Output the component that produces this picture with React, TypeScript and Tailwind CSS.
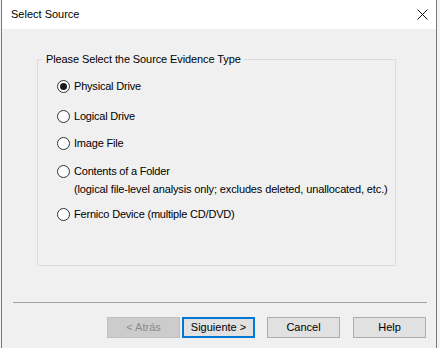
import React, { useState } from "react";

const options = [
  { id: "physical", label: "Physical Drive" },
  { id: "logical", label: "Logical Drive" },
  { id: "image", label: "Image File" },
  { id: "folder", label: "Contents of a Folder", note: "(logical file-level analysis only; excludes deleted, unallocated, etc.)" },
  { id: "fernico", label: "Fernico Device (multiple CD/DVD)" },
];

// vertical gap above each row, taken from the screenshot
const rowGaps = ["mt-[13px]", "mt-[16px]", "mt-[13px]", "mt-[14px]", "mt-[11px]"];

const Radio = ({ checked }: { checked: boolean }) => (
  <span className="flex items-center justify-center w-[13px] h-[13px] rounded-full border border-[#333333] bg-white shrink-0">
    {checked && <span className="w-[7px] h-[7px] rounded-full bg-[#1a1a1a]" />}
  </span>
);

const DialogButton = ({ children, primary, disabled }: { children: React.ReactNode; primary?: boolean; disabled?: boolean }) => {
  let cls = "w-[73px] h-[21px] flex items-center justify-center text-[11px] leading-none ";
  if (disabled) cls += "bg-[#cccccc] border border-[#bfbfbf] text-[#8a8a8a]";
  else if (primary) cls += "bg-[#e1e1e1] border-2 border-[#0078d7] text-black";
  else cls += "bg-[#e1e1e1] border border-[#adadad] text-black";
  return <button className={cls}>{children}</button>;
};

export default function App() {
  const [selected, setSelected] = useState("physical");

  return (
    <div className="w-[440px] h-[348px] bg-[#f3f3f3] overflow-hidden" style={{ fontFamily: '"Liberation Sans", Arial, sans-serif' }}>
      <div className="ml-px w-[436px] h-[348px] border-x border-[#7a7a7a] bg-[#f0f0f0] flex flex-col">
        {/* title bar */}
        <div className="h-[29px] bg-white flex items-center justify-between pl-[9px] pr-[8px] shrink-0">
          <span className="text-[11px] text-black">Select Source</span>
          <svg width="11" height="11" viewBox="0 0 11 11" className="mt-[-1px]">
            <path d="M0.5 0.5L10.5 10.5M10.5 0.5L0.5 10.5" stroke="#111" strokeWidth="1" />
          </svg>
        </div>

        {/* evidence type group */}
        <fieldset className="ml-[35px] mt-[23px] w-[359px] border border-[#dcdcdc] pb-[44px]">
          <legend className="ml-[5px] px-[3px] text-[11px] leading-[14px] text-black tracking-[-0.1px]">Please Select the Source Evidence Type</legend>
          <div className="pl-[19px]">
            {options.map((o, i) => (
              <div key={o.id} className={rowGaps[i]}>
                <label className="flex items-center gap-[4px] cursor-default" onClick={() => setSelected(o.id)}>
                  <Radio checked={selected === o.id} />
                  <span className="text-[11px] leading-[14px] text-black whitespace-nowrap tracking-[-0.2px]">{o.label}</span>
                </label>
                {o.note && (
                  <p className="mt-[4px] ml-[17px] text-[11px] leading-[14px] text-black whitespace-nowrap tracking-[-0.13px]">{o.note}</p>
                )}
              </div>
            ))}
          </div>
        </fieldset>

        {/* separator */}
        <div className="ml-[11px] mt-[36px] w-[414px] border-t border-[#a0a0a0]" />

        {/* buttons */}
        <div className="mt-[14px] ml-[105px] flex">
          <DialogButton disabled>&lt; Atrás</DialogButton>
          <div className="ml-[2px]">
            <DialogButton primary>Siguiente &gt;</DialogButton>
          </div>
          <div className="ml-[12px]">
            <DialogButton>Cancel</DialogButton>
          </div>
          <div className="ml-[13px]">
            <DialogButton>Help</DialogButton>
          </div>
        </div>
      </div>
    </div>
  );
}
